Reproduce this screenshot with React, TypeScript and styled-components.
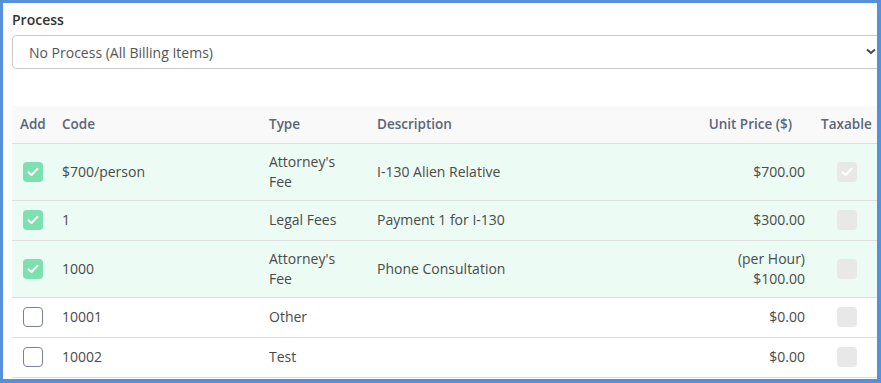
import React from 'react';
import styled, { createGlobalStyle } from 'styled-components';

const GlobalStyle = createGlobalStyle`
  body {
    margin: 0;
    background: #ffffff;
    font-family: "Open Sans", "Liberation Sans", sans-serif;
  }
`;

const Frame = styled.div`
  width: 881px;
  height: 383px;
  box-sizing: border-box;
  border-style: solid;
  border-color: #5590db;
  border-width: 3px 4px 4px 3px;
  overflow: hidden;
  background: #fff;
`;

const Content = styled.div`
  width: 869px;
  padding: 7px 0 0 9px;
`;

const Label = styled.div`
  font-size: 14px;
  line-height: 20px;
  font-weight: 600;
  color: #333;
`;

const SelectWrap = styled.div`
  position: relative;
  margin-top: 5px;
`;

const Select = styled.select`
  appearance: none;
  width: 100%;
  height: 34px;
  box-sizing: border-box;
  border: 1px solid #cccccc;
  border-radius: 4px;
  padding: 0 16px;
  font-family: inherit;
  font-size: 14px;
  color: #555;
  background: #fff;
`;

const Chevron = styled.svg`
  position: absolute;
  right: 5px;
  top: 13px;
`;

const Table = styled.table`
  margin-top: 37px;
  width: 869px;
  border-collapse: collapse;
  table-layout: fixed;
  font-size: 14px;
  color: #4a4a4a;
`;

const HeadCell = styled.th<{ align?: string; padRight?: number }>`
  background: #f9f9f9;
  height: 37px;
  padding: 0 ${({ padRight }) => padRight ?? 8}px 0 8px;
  box-sizing: border-box;
  text-align: ${({ align }) => align || 'left'};
  font-size: 13.5px;
  font-weight: 600;
  color: #5b6579;
  border-bottom: 1px solid #dedede;
`;

const Row = styled.tr<{ selected: boolean }>`
  background: ${({ selected }) => (selected ? '#ecfbf4' : '#fff')};
`;

const Cell = styled.td<{ align?: string }>`
  height: 40px;
  box-sizing: border-box;
  padding: 8px;
  line-height: 20px;
  text-align: ${({ align }) => align || 'left'};
  vertical-align: middle;
  border-bottom: 1px solid #dedede;
`;

const Box = styled.span<{ checked?: boolean; disabled?: boolean }>`
  display: flex;
  align-items: center;
  justify-content: center;
  width: 20px;
  height: 20px;
  box-sizing: border-box;
  border-radius: 4px;
  margin: 0 auto;
  background: ${({ checked, disabled }) =>
    disabled ? '#e8e8e8' : checked ? '#7de0b0' : '#fff'};
  border: ${({ checked, disabled }) =>
    checked || disabled ? 'none' : '1px solid #7c819b'};
`;

const Check = ({ color }: { color: string }) => (
  <svg width="12" height="10" viewBox="0 0 12 10">
    <path d="M1.5 5.2 L4.5 8 L10.5 1.8" fill="none" stroke={color} strokeWidth="2" strokeLinecap="round" strokeLinejoin="round" />
  </svg>
);

interface Item {
  code: string;
  type: string;
  description: string;
  price: string[];
  added: boolean;
  taxable: boolean;
}

const items: Item[] = [
  { code: '$700/person', type: "Attorney's Fee", description: 'I-130 Alien Relative', price: ['$700.00'], added: true, taxable: true },
  { code: '1', type: 'Legal Fees', description: 'Payment 1 for I-130', price: ['$300.00'], added: true, taxable: false },
  { code: '1000', type: "Attorney's Fee", description: 'Phone Consultation', price: ['(per Hour)', '$100.00'], added: true, taxable: false },
  { code: '10001', type: 'Other', description: '', price: ['$0.00'], added: false, taxable: false },
  { code: '10002', type: 'Test', description: '', price: ['$0.00'], added: false, taxable: false },
];

const App: React.FC = () => (
  <>
    <GlobalStyle />
    <Frame>
      <Content>
        <Label>Process</Label>
        <SelectWrap>
          <Select defaultValue="none">
            <option value="none">No Process (All Billing Items)</option>
          </Select>
          <Chevron width="10" height="7" viewBox="0 0 10 7">
            <path d="M1 1.5 L5 5 L9 1.5" fill="none" stroke="#444" strokeWidth="2" />
          </Chevron>
        </SelectWrap>
        <Table>
          <colgroup>
            <col style={{ width: 42 }} />
            <col style={{ width: 207 }} />
            <col style={{ width: 108 }} />
            <col style={{ width: 331 }} />
            <col style={{ width: 113 }} />
            <col style={{ width: 68 }} />
          </colgroup>
          <thead>
            <tr>
              <HeadCell>Add</HeadCell>
              <HeadCell>Code</HeadCell>
              <HeadCell>Type</HeadCell>
              <HeadCell>Description</HeadCell>
              <HeadCell align="right" padRight={21}>Unit Price ($)</HeadCell>
              <HeadCell>Taxable</HeadCell>
            </tr>
          </thead>
          <tbody>
            {items.map(item => (
              <Row key={item.code} selected={item.added}>
                <Cell>
                  <Box checked={item.added}>{item.added && <Check color="#fff" />}</Box>
                </Cell>
                <Cell>{item.code}</Cell>
                <Cell>{item.type}</Cell>
                <Cell>{item.description}</Cell>
                <Cell align="right">
                  {item.price.map(p => (
                    <div key={p}>{p}</div>
                  ))}
                </Cell>
                <Cell>
                  <Box disabled>{item.taxable && <Check color="#fff" />}</Box>
                </Cell>
              </Row>
            ))}
          </tbody>
        </Table>
      </Content>
    </Frame>
  </>
);

export default App;
